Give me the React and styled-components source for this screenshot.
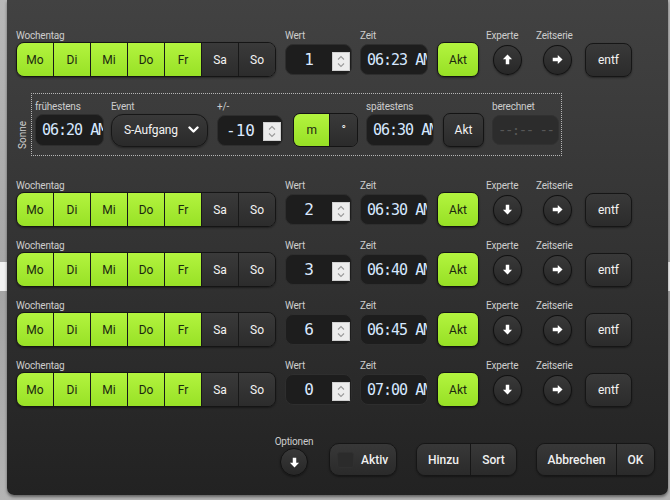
import React from 'react'
import styled, { createGlobalStyle } from 'styled-components'

const GlobalStyle = createGlobalStyle`
  html, body { margin: 0; padding: 0; }
  body {
    width: 670px;
    height: 500px;
    overflow: hidden;
    font-family: Roboto, 'Open Sans', sans-serif;
    background: linear-gradient(to bottom, #b8b8b8 0, #a7a7a7 262px, #f1f1f1 262px, #f1f1f1 291px, #a4a4a4 291px, #b4b4b4 100%);
  }
`

const Dialog = styled.div`
  box-sizing: border-box;
  margin-left: 7px;
  width: 661px;
  height: 495px;
  padding: 30px 13px 19px 9px;
  display: flex;
  flex-direction: column;
  background: linear-gradient(to bottom, #424242 0%, #333 50%, #222 100%);
  border-radius: 0 0 7px 7px;
  box-shadow: 0 2px 3px rgba(0, 0, 0, 0.45);
`

const Row = styled.div`
  display: flex;
  align-items: flex-end;
`

const Field = styled.div`
  display: flex;
  flex-direction: column;
  width: ${p => p.$w}px;
  margin-left: ${p => p.$ml || 0}px;
`

const Label = styled.div`
  height: 12px;
  line-height: 12px;
  font-size: 10px;
  letter-spacing: -0.2px;
  color: #cdcdcd;
  white-space: nowrap;
  text-align: ${p => p.$center ? 'center' : 'left'};
`

const Slot = styled.div`
  height: ${p => p.$h || 35}px;
  display: flex;
  align-items: center;
`

const DayGroup = styled.div`
  box-sizing: border-box;
  display: flex;
  width: 260px;
  height: 35px;
  border: 1px solid #151515;
  border-radius: 8px;
  overflow: hidden;
  box-shadow: 0 1px 2px rgba(0, 0, 0, 0.4);
`

const DayBtn = styled.div`
  flex: 1;
  display: flex;
  align-items: center;
  justify-content: center;
  font-size: 12px;
  color: ${p => p.$on ? '#1c2810' : '#f2f2f2'};
  background: ${p => p.$on
    ? 'linear-gradient(to bottom, #b3f43f, #98e126)'
    : 'linear-gradient(to bottom, #3a3a3a, #2c2c2c)'};
  & + & { border-left: 1px solid #181818; }
`

const InBox = styled.div`
  box-sizing: border-box;
  width: ${p => p.$w}px;
  height: ${p => p.$h || 31}px;
  display: flex;
  align-items: center;
  background: #1d1d1d;
  border: 1px solid #2e2e2e;
  border-radius: 8px;
  overflow: hidden;
`

const NumValue = styled.div`
  flex: 1;
  text-align: center;
  font-family: 'DejaVu Sans Mono', monospace;
  font-size: 16px;
  color: #dbe9ff;
`

const Spinner = styled.div`
  width: 18px;
  height: 19px;
  margin: 3px 1px 0 0;
  background: #ececec;
  border: 1px solid #cfcfcf;
  box-sizing: border-box;
  display: flex;
  align-items: center;
  justify-content: center;
`

const TimeText = styled.div`
  padding-left: ${p => p.$dim ? 5 : 6}px;
  white-space: nowrap;
  font-family: 'DejaVu Sans Mono', monospace;
  font-size: ${p => p.$dim ? 14 : 15}px;
  letter-spacing: ${p => p.$dim ? -1.5 : -1}px;
  color: ${p => p.$dim ? '#575757' : '#d6e8ff'};
`

const AktBtn = styled.div`
  box-sizing: border-box;
  width: ${p => p.$w || 42}px;
  height: ${p => p.$h || 35}px;
  display: flex;
  align-items: center;
  justify-content: center;
  font-size: 12px;
  border: 1px solid #141414;
  border-radius: 7px;
  color: ${p => p.$dark ? '#f2f2f2' : '#1c2810'};
  background: ${p => p.$dark
    ? 'linear-gradient(to bottom, #3a3a3a, #2b2b2b)'
    : 'linear-gradient(to bottom, #b3f43f, #97e025)'};
  box-shadow: 0 1px 2px rgba(0, 0, 0, 0.4);
`

const RoundBtn = styled.div`
  box-sizing: border-box;
  width: ${p => p.$d || 30}px;
  height: ${p => p.$d || 30}px;
  margin-left: ${p => p.$ml || 0}px;
  border-radius: 50%;
  display: flex;
  align-items: center;
  justify-content: center;
  background: linear-gradient(to bottom, #393939, #272727);
  border: 1px solid #121212;
  box-shadow: 0 1px 2px rgba(0, 0, 0, 0.4);
`

const DarkBtn = styled.div`
  box-sizing: border-box;
  width: ${p => p.$w}px;
  height: ${p => p.$h || 34}px;
  display: flex;
  align-items: center;
  justify-content: center;
  font-size: 12px;
  color: #f2f2f2;
  background: linear-gradient(to bottom, #393939, #2b2b2b);
  border: 1px solid #161616;
  border-radius: 8px;
  box-shadow: 0 1px 2px rgba(0, 0, 0, 0.4);
`

const SonneWrap = styled.div`
  display: flex;
  margin-top: 16px;
`

const SideLabel = styled.div`
  writing-mode: vertical-rl;
  transform: rotate(180deg);
  align-self: flex-end;
  margin: 0 2px 7px 1px;
  width: 12px;
  line-height: 12px;
  font-size: 10px;
  color: #cdcdcd;
`

const SonneBox = styled.div`
  display: flex;
  align-items: flex-end;
  padding: 7px 2px 8px 3px;
  border: 1px dotted #b5b5b5;
`

const Select = styled.div`
  box-sizing: border-box;
  width: 97px;
  height: 33px;
  display: flex;
  align-items: center;
  justify-content: space-between;
  padding: 0 8px 0 12px;
  font-size: 12px;
  letter-spacing: -0.2px;
  color: #f2f2f2;
  background: linear-gradient(to bottom, #393939, #2a2a2a);
  border: 1px solid #171717;
  border-radius: 12px;
  box-shadow: 0 1px 2px rgba(0, 0, 0, 0.4);
`

const UnitGroup = styled.div`
  box-sizing: border-box;
  display: flex;
  width: 65px;
  height: 34px;
  border: 1px solid #141414;
  border-radius: 7px;
  overflow: hidden;
`

const UnitBtn = styled.div`
  width: ${p => p.$w}px;
  display: flex;
  align-items: center;
  justify-content: center;
  font-size: 12px;
  color: ${p => p.$on ? '#1c2810' : '#f2f2f2'};
  background: ${p => p.$on
    ? 'linear-gradient(to bottom, #b3f43f, #97e025)'
    : 'linear-gradient(to bottom, #3a3a3a, #2b2b2b)'};
  & + & { border-left: 1px solid #161616; }
`

const DisabledBox = styled.div`
  box-sizing: border-box;
  width: 67px;
  height: 30px;
  display: flex;
  align-items: center;
  background: #2c2c2c;
  border: 1px solid #313131;
  border-radius: 8px;
  overflow: hidden;
`

const RowList = styled.div`
  display: flex;
  flex-direction: column;
  gap: 13px;
  margin-top: 24px;
`

const BottomBar = styled.div`
  margin-top: auto;
  display: flex;
  align-items: flex-end;
  justify-content: flex-end;
`

const BarGroup = styled.div`
  box-sizing: border-box;
  display: flex;
  height: 33px;
  margin-left: ${p => p.$ml || 0}px;
  border: 1px solid #161616;
  border-radius: 9px;
  overflow: hidden;
  box-shadow: 0 1px 2px rgba(0, 0, 0, 0.4);
`

const BarBtn = styled.div`
  width: ${p => p.$w}px;
  display: flex;
  align-items: center;
  justify-content: center;
  font-size: 12px;
  font-weight: 500;
  color: #f0f0f0;
  background: linear-gradient(to bottom, #383838, #2a2a2a);
  & + & { border-left: 1px solid #161616; }
`

const ToggleBtn = styled.div`
  box-sizing: border-box;
  width: 68px;
  height: 33px;
  margin-left: 16px;
  display: flex;
  align-items: center;
  padding-left: 7px;
  gap: 7px;
  font-size: 12px;
  font-weight: 500;
  color: #f0f0f0;
  background: linear-gradient(to bottom, #383838, #2a2a2a);
  border: 1px solid #161616;
  border-radius: 10px;
  box-shadow: 0 1px 2px rgba(0, 0, 0, 0.4);
`

const CheckSquare = styled.div`
  width: 17px;
  height: 16px;
  border-radius: 3px;
  background: #2b2b2b;
  border: 1px solid #303030;
  box-sizing: border-box;
`

const OptField = styled.div`
  display: flex;
  flex-direction: column;
  align-items: center;
  width: 38px;
`

const Arrow = ({ dir = 'down' }) => {
  const rot = { down: 0, up: 180, right: -90 }[dir]
  return (
    <svg width="11" height="11" viewBox="0 0 12 12" style={{ transform: `rotate(${rot}deg)` }}>
      <path d="M6 11.5 L1 6.3 H4.1 V0.8 H7.9 V6.3 H11 Z" fill="#fff" />
    </svg>
  )
}

const SpinIcon = () => (
  <Spinner>
    <svg width="10" height="15" viewBox="0 0 10 15">
      <path d="M2 5.5 L5 2.5 L8 5.5 M2 9.5 L5 12.5 L8 9.5" stroke="#9a9a9a" strokeWidth="1.1" fill="none" />
    </svg>
  </Spinner>
)

const Chevron = () => (
  <svg width="11" height="8" viewBox="0 0 11 8">
    <path d="M1.5 1.5 L5.5 5.5 L9.5 1.5" stroke="#fff" strokeWidth="2.4" fill="none" strokeLinecap="round" strokeLinejoin="round" />
  </svg>
)

const days = ['Mo', 'Di', 'Mi', 'Do', 'Fr', 'Sa', 'So']

const TimerRow = ({ wert, zeit, expert }) => (
  <Row>
    <Field $w={260}>
      <Label>Wochentag</Label>
      <DayGroup>
        {days.map((d, i) => (
          <DayBtn key={d} $on={i < 5}>{d}</DayBtn>
        ))}
      </DayGroup>
    </Field>
    <Field $w={67} $ml={9}>
      <Label>Wert</Label>
      <Slot>
        <InBox $w={67}>
          <NumValue>{wert}</NumValue>
          <SpinIcon />
        </InBox>
      </Slot>
    </Field>
    <Field $w={68} $ml={8}>
      <Label>Zeit</Label>
      <Slot>
        <InBox $w={68}>
          <TimeText>{zeit} AM</TimeText>
        </InBox>
      </Slot>
    </Field>
    <Field $w={42} $ml={9}>
      <Label />
      <AktBtn>Akt</AktBtn>
    </Field>
    <Field $w={36} $ml={7}>
      <Label>Experte</Label>
      <Slot>
        <RoundBtn $ml={7}><Arrow dir={expert} /></RoundBtn>
      </Slot>
    </Field>
    <Field $w={36} $ml={14}>
      <Label>Zeitserie</Label>
      <Slot>
        <RoundBtn $ml={7}><Arrow dir="right" /></RoundBtn>
      </Slot>
    </Field>
    <Field $w={47} $ml={13}>
      <Label />
      <Slot>
        <DarkBtn $w={47}>entf</DarkBtn>
      </Slot>
    </Field>
  </Row>
)

const rows = [
  { wert: '2', zeit: '06:30' },
  { wert: '3', zeit: '06:40' },
  { wert: '6', zeit: '06:45' },
  { wert: '0', zeit: '07:00' },
]

export default function App() {
  return (
    <>
      <GlobalStyle />
      <Dialog>
        <TimerRow wert="1" zeit="06:23" expert="up" />

        <SonneWrap>
          <SideLabel>Sonne</SideLabel>
          <SonneBox>
            <Field $w={69}>
              <Label>frühestens</Label>
              <Slot $h={34}>
                <InBox $w={69} $h={32}>
                  <TimeText>06:20 AM</TimeText>
                </InBox>
              </Slot>
            </Field>
            <Field $w={97} $ml={7}>
              <Label>Event</Label>
              <Slot $h={34}>
                <Select>
                  <span>S-Aufgang</span>
                  <Chevron />
                </Select>
              </Slot>
            </Field>
            <Field $w={66} $ml={9}>
              <Label>+/-</Label>
              <Slot $h={34}>
                <InBox $w={66}>
                  <NumValue>-10</NumValue>
                  <SpinIcon />
                </InBox>
              </Slot>
            </Field>
            <Field $w={65} $ml={10}>
              <Label />
              <UnitGroup>
                <UnitBtn $w={37} $on>m</UnitBtn>
                <UnitBtn $w={28}>°</UnitBtn>
              </UnitGroup>
            </Field>
            <Field $w={68} $ml={8}>
              <Label>spätestens</Label>
              <Slot $h={34}>
                <InBox $w={68} $h={32}>
                  <TimeText>06:30 AM</TimeText>
                </InBox>
              </Slot>
            </Field>
            <Field $w={41} $ml={9}>
              <Label />
              <AktBtn $w={41} $h={34} $dark>Akt</AktBtn>
            </Field>
            <Field $w={67} $ml={8}>
              <Label>berechnet</Label>
              <Slot $h={34}>
                <DisabledBox>
                  <TimeText $dim>--:-- --</TimeText>
                </DisabledBox>
              </Slot>
            </Field>
          </SonneBox>
        </SonneWrap>

        <RowList>
          {rows.map(r => (
            <TimerRow key={r.wert} wert={r.wert} zeit={r.zeit} expert="down" />
          ))}
        </RowList>

        <BottomBar>
          <OptField>
            <Label $center>Optionen</Label>
            <RoundBtn $d={28}><Arrow dir="down" /></RoundBtn>
          </OptField>
          <ToggleBtn>
            <CheckSquare />
            Aktiv
          </ToggleBtn>
          <BarGroup $ml={19}>
            <BarBtn $w={53}>Hinzu</BarBtn>
            <BarBtn $w={45}>Sort</BarBtn>
          </BarGroup>
          <BarGroup $ml={19}>
            <BarBtn $w={79}>Abbrechen</BarBtn>
            <BarBtn $w={37}>OK</BarBtn>
          </BarGroup>
        </BottomBar>
      </Dialog>
    </>
  )
}
